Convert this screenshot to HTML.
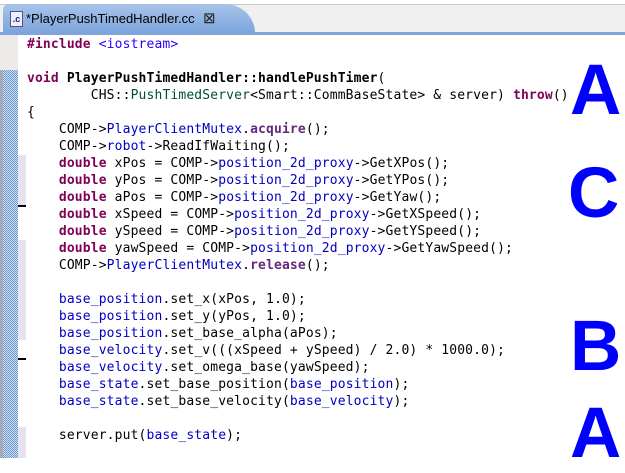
<!DOCTYPE html>
<html><head><style>
body{margin:0;width:625px;height:458px;overflow:hidden;background:#fff;position:relative;font-family:"Liberation Sans",sans-serif}
.tabbar{position:absolute;left:0;width:625px;background:#f0f0f0;border-top:1px solid #c8c8c8;box-sizing:border-box;top:4px;height:29px}
.tab{position:absolute;left:3px;top:4px;width:222px;height:29px;background:linear-gradient(#a8c4ea,#7da5dc);border-radius:6px 0 0 0}
.tabcurve{position:absolute;left:215px;top:4px;width:40px;height:29px;background:linear-gradient(#a8c4ea,#7da5dc);border-top-right-radius:30px 29px}
.blue{position:absolute;left:0;top:32px;width:625px;height:3px;background:#7da5dc}
.tabt{position:absolute;left:26px;top:11px;font-size:13px;color:#000}
.icon{position:absolute;left:10px;top:11px;width:11px;height:14px;background:#eef;border:1px solid #557;font:bold 9px "Liberation Sans";text-align:center;line-height:14px;color:#226}
.close{position:absolute;left:203px;top:9px;font-size:15px;color:#222}
.g1{position:absolute;left:0;top:35px;width:18px;height:423px;background:#ecebea}
.g2{position:absolute;left:3px;top:70px;width:15px;height:388px;background-color:#9ebde0;background-image:repeating-conic-gradient(#6f9cd3 0 25%,#c9dbef 0 50%);background-size:2px 2px}
.g0{position:absolute;left:0;top:70px;width:3px;height:388px;background:#a9a9b4}
.lav{position:absolute;left:18px;width:8px;background:#e6e2f0}
.tick{position:absolute;left:18px;width:8px;height:2px;background:#000}
pre{position:absolute;left:27px;top:36px;margin:0;font-family:"DejaVu Sans Mono",monospace;font-size:13px;line-height:17px;letter-spacing:0.14px;color:#000}
.k{color:#7f0055;font-weight:bold}.f{color:#0000c0}.s{color:#2a00ff}.t{color:#005032}.m{color:#642880;font-weight:bold}.b{font-weight:bold}
.L{position:absolute;font:bold 71px "Liberation Sans",sans-serif;color:#0000ff;line-height:1}
</style></head><body>
<div class="tabbar"></div>
<div class="tab"></div><div class="tabcurve"></div>
<div class="blue"></div>
<div class="icon">.c</div>
<div class="tabt">*PlayerPushTimedHandler.cc</div>
<div class="close">⊠</div>
<div class="g1"></div><div class="g0"></div><div class="g2"></div>
<div class="lav" style="top:155px;height:50px"></div>
<div class="lav" style="top:240px;height:100px"></div>
<div class="lav" style="top:427px;height:31px"></div>
<div class="tick" style="top:205px"></div>
<div class="tick" style="top:358px"></div>
<pre><span class="k">#include</span> <span class="s">&lt;iostream&gt;</span>

<span class="k">void</span> <span class="b">PlayerPushTimedHandler::handlePushTimer</span>(
        CHS::<span class="t">PushTimedServer</span>&lt;Smart::CommBaseState&gt; &amp; server) <span class="k">throw</span>()
{
    COMP-&gt;<span class="f">PlayerClientMutex</span>.<span class="m">acquire</span>();
    COMP-&gt;<span class="f">robot</span>-&gt;ReadIfWaiting();
    <span class="k">double</span> xPos = COMP-&gt;<span class="f">position_2d_proxy</span>-&gt;GetXPos();
    <span class="k">double</span> yPos = COMP-&gt;<span class="f">position_2d_proxy</span>-&gt;GetYPos();
    <span class="k">double</span> aPos = COMP-&gt;<span class="f">position_2d_proxy</span>-&gt;GetYaw();
    <span class="k">double</span> xSpeed = COMP-&gt;<span class="f">position_2d_proxy</span>-&gt;GetXSpeed();
    <span class="k">double</span> ySpeed = COMP-&gt;<span class="f">position_2d_proxy</span>-&gt;GetYSpeed();
    <span class="k">double</span> yawSpeed = COMP-&gt;<span class="f">position_2d_proxy</span>-&gt;GetYawSpeed();
    COMP-&gt;<span class="f">PlayerClientMutex</span>.<span class="m">release</span>();

    <span class="f">base_position</span>.set_x(xPos, 1.0);
    <span class="f">base_position</span>.set_y(yPos, 1.0);
    <span class="f">base_position</span>.set_base_alpha(aPos);
    <span class="f">base_velocity</span>.set_v(((xSpeed + ySpeed) / 2.0) * 1000.0);
    <span class="f">base_velocity</span>.set_omega_base(yawSpeed);
    <span class="f">base_state</span>.set_base_position(<span class="f">base_position</span>);
    <span class="f">base_state</span>.set_base_velocity(<span class="f">base_velocity</span>);

    server.put(<span class="f">base_state</span>);</pre>
<div class="L" style="left:570px;top:55px">A</div>
<div class="L" style="left:568px;top:158px">C</div>
<div class="L" style="left:570px;top:311px">B</div>
<div class="L" style="left:570px;top:398px">A</div>
</body></html>
